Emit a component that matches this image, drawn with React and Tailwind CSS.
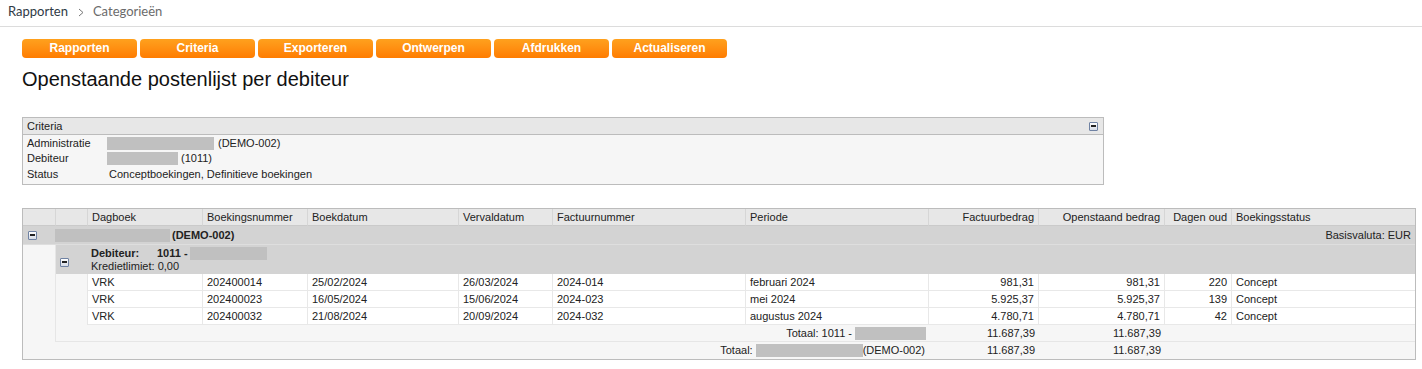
import React from 'react';

const Minus = () => (
  <span className="inline-flex w-[9px] h-[9px] items-center justify-center border border-[#6f82a3] rounded-[1px] bg-gradient-to-b from-white to-[#d5dbe6]">
    <span className="block w-[5px] h-[2px] bg-[#222]"></span>
  </span>
);

const Blank = ({ w }) => <span className={`inline-block h-[13px] bg-[#c0c0c0] align-middle ${w}`}></span>;

const buttons = ['Rapporten', 'Criteria', 'Exporteren', 'Ontwerpen', 'Afdrukken', 'Actualiseren'];

const rows = [
  ['VRK', '202400014', '25/02/2024', '26/03/2024', '2024-014', 'februari 2024', '981,31', '981,31', '220', 'Concept'],
  ['VRK', '202400023', '16/05/2024', '15/06/2024', '2024-023', 'mei 2024', '5.925,37', '5.925,37', '139', 'Concept'],
  ['VRK', '202400032', '21/08/2024', '20/09/2024', '2024-032', 'augustus 2024', '4.780,71', '4.780,71', '42', 'Concept'],
];

const headers = [
  ['', false], ['', false], ['Dagboek', false], ['Boekingsnummer', false], ['Boekdatum', false],
  ['Vervaldatum', false], ['Factuurnummer', false], ['Periode', false], ['Factuurbedrag', true],
  ['Openstaand bedrag', true], ['Dagen oud', true], ['Boekingsstatus', false],
];

const rightCols = [6, 7, 8];

export default function App() {
  return (
    <div className="min-h-screen bg-white text-[#222] font-['Liberation_Sans',Arial,sans-serif]">
      {/* Breadcrumb */}
      <div className="h-[27px] border-b border-[#dcdcdc] flex items-center pl-[8px] pb-[2px] font-['Lato',sans-serif] text-[13px]">
        <span className="text-[#2f3a45]">Rapporten</span>
        <svg className="ml-[10px] mr-[9px]" width="6" height="9" viewBox="0 0 6 9">
          <polyline points="1,1 5,4.5 1,8" fill="none" stroke="#777" strokeWidth="1" />
        </svg>
        <span className="text-[#6b6b6b]">Categorieën</span>
      </div>

      <div className="pl-[22px]">
        {/* Buttons */}
        <div className="flex gap-[3px] mt-[12px]">
          {buttons.map((b) => (
            <button
              key={b}
              className="w-[115px] h-[19px] rounded-[4px] bg-gradient-to-b from-[#ffa11d] to-[#ff7c00] text-white font-bold text-[12px] leading-[19px]"
            >
              {b}
            </button>
          ))}
        </div>

        {/* Title */}
        <h1 className="mt-[10px] text-[20px] leading-[23px] text-[#111]">Openstaande postenlijst per debiteur</h1>

        {/* Criteria */}
        <div className="mt-[26px] w-[1082px] border border-[#bcbcbc] bg-[#f6f6f6] text-[11px]">
          <div className="h-[17px] border-b border-[#bcbcbc] bg-[#e7e7e7] flex items-center justify-between pl-[4px] pr-[5px]">
            <span>Criteria</span>
            <Minus />
          </div>
          <div className="pt-[1px] pb-[2px] pl-[4px]">
            <div className="flex items-center h-[15px]">
              <span className="w-[80px]">Administratie</span>
              <Blank w="w-[107px]" />
              <span className="ml-[4px]">(DEMO-002)</span>
            </div>
            <div className="flex items-center h-[15px]">
              <span className="w-[80px]">Debiteur</span>
              <Blank w="w-[71px]" />
              <span className="ml-[3px]">(1011)</span>
            </div>
            <div className="flex items-center h-[16px]">
              <span className="w-[80px]">Status</span>
              <span className="ml-[2px]">Conceptboekingen, Definitieve boekingen</span>
            </div>
          </div>
        </div>

        {/* Table */}
        <div className="mt-[23px] w-[1394px] border border-[#bcbcbc] text-[11px] grid grid-cols-[33px_32px_115px_105px_151px_94px_193px_183px_110px_126px_67px_183px]">
          {headers.map(([h, right], i) => (
            <div
              key={i}
              className={`h-[17px] bg-[#e7e7e7] border-b border-[#cacaca] flex items-center px-[4px] ${i < 11 ? 'border-r border-r-[#d6d6d6]' : ''} ${right ? 'justify-end' : ''}`}
            >
              {h}
            </div>
          ))}

          {/* Administration group */}
          <div className="h-[19px] bg-[#d3d3d3] border-b border-[#dedede] flex items-center pl-[5px]">
            <Minus />
          </div>
          <div className="col-span-11 h-[19px] bg-[#d3d3d3] border-b border-[#dedede] flex items-center justify-between pr-[4px] font-bold">
            <span className="flex items-center">
              <Blank w="w-[115px] -ml-px" />
              <span className="ml-[2px]">(DEMO-002)</span>
            </span>
            <span className="font-normal">Basisvaluta: EUR</span>
          </div>

          {/* Debtor group */}
          <div className="row-span-5 bg-[#f6f6f6] border-r border-[#e6e6e6]"></div>
          <div className="h-[29px] bg-[#d3d3d3] pl-[4px] pt-[6px]">
            <Minus />
          </div>
          <div className="col-span-10 h-[29px] bg-[#d3d3d3] pl-[3px] pt-[2px] leading-[13px]">
            <div className="flex items-center font-bold">
              <span className="w-[66px]">Debiteur:</span>
              <span>1011 -</span>
              <Blank w="w-[77px] ml-[2px]" />
            </div>
            <div>Kredietlimiet: 0,00</div>
          </div>

          {rows.map((r, ri) => (
            <React.Fragment key={ri}>
              <div className="h-[17px] bg-[#f6f6f6] border-r border-[#e6e6e6]"></div>
              {r.map((c, ci) => (
                <div
                  key={ci}
                  className={`h-[17px] bg-white border-b border-[#e8e8e8] flex items-center px-[4px] ${ci < 9 ? 'border-r border-r-[#e8e8e8]' : ''} ${rightCols.includes(ci) ? 'justify-end' : ''}`}
                >
                  {c}
                </div>
              ))}
            </React.Fragment>
          ))}

          {/* Debtor total */}
          <div className="col-span-7 h-[17px] bg-[#f6f6f6] border-b border-[#e6e6e6] flex items-center justify-end pr-[3px]">
            <span>Totaal: 1011 -</span>
            <Blank w="w-[71px] ml-[3px]" />
          </div>
          <div className="h-[17px] bg-[#f6f6f6] border-b border-[#e6e6e6] flex items-center justify-end pr-[4px]">11.687,39</div>
          <div className="h-[17px] bg-[#f6f6f6] border-b border-[#e6e6e6] flex items-center justify-end pr-[4px]">11.687,39</div>
          <div className="col-span-2 h-[17px] bg-[#f6f6f6] border-b border-[#e6e6e6]"></div>

          {/* Administration total */}
          <div className="col-span-8 h-[17px] bg-[#f6f6f6] flex items-center justify-end pr-[4px]">
            <span>Totaal:</span>
            <Blank w="w-[107px] ml-[3px]" />
            <span>(DEMO-002)</span>
          </div>
          <div className="h-[17px] bg-[#f6f6f6] flex items-center justify-end pr-[4px]">11.687,39</div>
          <div className="h-[17px] bg-[#f6f6f6] flex items-center justify-end pr-[4px]">11.687,39</div>
          <div className="col-span-2 h-[17px] bg-[#f6f6f6]"></div>
        </div>
      </div>
    </div>
  );
}
